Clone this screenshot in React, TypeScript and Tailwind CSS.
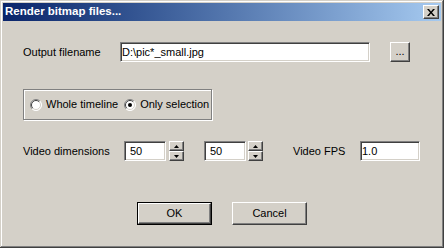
import React from "react";

const font = { fontFamily: '"Liberation Sans", Arial, sans-serif' };

// sunken field, classic 3D edge
function Field({ value, className, pad }: { value: string; className: string; pad: string }) {
  return (
    <div
      className={`h-[20px] bg-white flex items-center text-[11px] text-black border border-t-[#808080] border-l-[#808080] border-b-white border-r-white shadow-[inset_1px_1px_#404040,inset_-1px_-1px_#d4d0c8] ${className}`}
    >
      <span className={pad}>{value}</span>
    </div>
  );
}

function Raised({ className, children }: { className: string; children?: React.ReactNode }) {
  return (
    <div
      className={`bg-[#d4d0c8] flex items-center justify-center border border-t-white border-l-white border-b-[#404040] border-r-[#404040] shadow-[inset_-1px_-1px_#808080] ${className}`}
    >
      {children}
    </div>
  );
}

function Spinner({ className }: { className: string }) {
  return (
    <div className={`flex flex-col w-[15px] h-[20px] ${className}`}>
      <Raised className="h-[10px] w-full">
        <svg width="5" height="3" viewBox="0 0 5 3">
          <path d="M2.5 0 L5 3 L0 3 Z" fill="#000" />
        </svg>
      </Raised>
      <Raised className="h-[10px] w-full">
        <svg width="5" height="3" viewBox="0 0 5 3">
          <path d="M0 0 L5 0 L2.5 3 Z" fill="#000" />
        </svg>
      </Raised>
    </div>
  );
}

function Radio({ checked }: { checked?: boolean }) {
  return (
    <svg width="12" height="12" viewBox="0 0 12 12" className="shrink-0">
      <circle cx="6" cy="6" r="5.5" fill="#fff" />
      <path d="M2.1 9.9 A5.5 5.5 0 0 1 9.9 2.1" stroke="#808080" fill="none" />
      <path d="M9.9 2.1 A5.5 5.5 0 0 1 2.1 9.9" stroke="#fff" fill="none" />
      <path d="M2.8 9.2 A4.5 4.5 0 0 1 9.2 2.8" stroke="#404040" fill="none" />
      <path d="M9.2 2.8 A4.5 4.5 0 0 1 2.8 9.2" stroke="#d4d0c8" fill="none" />
      {checked && <circle cx="6" cy="6" r="2" fill="#000" />}
    </svg>
  );
}

export default function App() {
  return (
    <div
      style={font}
      className="w-[444px] h-[248px] bg-[#d4d0c8] p-[3px] flex flex-col text-black shadow-[inset_-1px_-1px_#404040,inset_1px_1px_#d4d0c8,inset_-2px_-2px_#808080,inset_2px_2px_#ffffff]"
    >
      {/* TITLE BAR */}
      <div className="h-[18px] flex items-center justify-between pl-[2px] pr-[2px] bg-gradient-to-r from-[#0a246a] to-[#a6caf0]">
        <span className="text-white font-bold text-[11.5px]">Render bitmap files...</span>
        <Raised className="w-[16px] h-[14px]">
          <svg width="8" height="7" viewBox="0 0 8 7">
            <path d="M0 0h2l2 2.5L6 0h2L5 3.5 8 7H6L4 4.5 2 7H0l3-3.5z" fill="#000" />
          </svg>
        </Raised>
      </div>

      {/* BODY */}
      <div className="flex-1 flex flex-col pl-[20px] text-[11px]">
        <div className="flex items-center mt-[21px]">
          <span className="w-[97px]">Output filename</span>
          <Field value="D:\pic*_small.jpg" className="w-[250px]" pad="pl-[1px]" />
          <Raised className="ml-[20px] w-[20px] h-[20px]">
            <span className="leading-none -mt-[2px]">...</span>
          </Raised>
        </div>

        <div className="mt-[27px] w-[189px] h-[31px] border border-[#808080] shadow-[inset_1px_1px_#ffffff,1px_1px_#ffffff] flex items-center pl-[6px]">
          <Radio />
          <span className="ml-[4px]">Whole timeline</span>
          <span className="ml-[6px]" />
          <Radio checked />
          <span className="ml-[4px]">Only selection</span>
        </div>

        <div className="flex items-center mt-[21px]">
          <span className="w-[101px]">Video dimensions</span>
          <Field value="50" className="w-[42px]" pad="pl-[5px]" />
          <Spinner className="ml-[3px]" />
          <Field value="50" className="w-[42px] ml-[20px]" pad="pl-[5px]" />
          <Spinner className="ml-[2px]" />
          <span className="ml-[30px] w-[67px]">Video FPS</span>
          <Field value="1.0" className="w-[60px]" pad="pl-[1px]" />
        </div>

        <div className="flex mt-[41px] ml-[114px]">
          <div className="w-[75px] h-[23px] border border-black">
            <Raised className="w-full h-full">OK</Raised>
          </div>
          <Raised className="ml-[20px] w-[75px] h-[23px]">Cancel</Raised>
        </div>
      </div>
    </div>
  );
}
